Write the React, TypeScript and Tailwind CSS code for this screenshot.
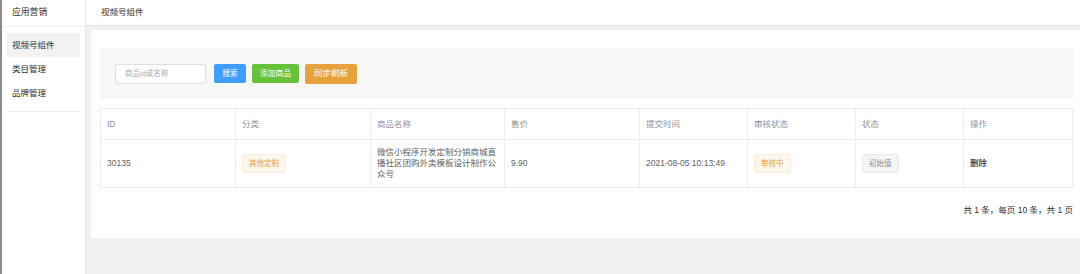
import React from "react";

const font = { fontFamily: '"Liberation Sans", "Noto Sans CJK SC", "Noto Sans", sans-serif' };

const cols = [135, 135, 134, 135, 108, 108, 108, 109];
const headers = ["ID", "分类", "商品名称", "售价", "提交时间", "审核状态", "状态", "操作"];

function Tag({ children, tone }: { children: React.ReactNode; tone: "warn" | "info" }) {
  const cls =
    tone === "warn"
      ? "bg-[#fdf6ec] border-[#faecd8] text-[#e6a23c]"
      : "bg-[#f4f4f5] border-[#e9e9eb] text-[#909399]";
  return (
    <span className={`inline-flex items-center h-[19px] px-[6px] rounded-[3px] border text-[7.5px] ${cls}`}>
      {children}
    </span>
  );
}

export default function App() {
  return (
    <div style={font} className="flex w-[1080px] h-[274px] overflow-hidden text-[8.5px] text-[#606266]">
      <aside className="w-[86px] shrink-0 border-l-2 border-l-[#8a8a8a] border-r border-r-[#ececec] bg-white flex flex-col">
        <div className="h-[27px] border-b border-[#f0f0f0] flex items-center pl-[10px] text-[8.8px] text-[#303133]">
          应用营销
        </div>
        <div className="px-[5px] pt-[6px]">
          <div className="h-[24px] rounded-[2px] bg-[#f2f2f2] flex items-center pl-[5px] text-[#303133]">视频号组件</div>
          <div className="h-[24px] flex items-center pl-[5px] text-[#303133]">类目管理</div>
          <div className="h-[24px] flex items-center pl-[5px] text-[#303133]">品牌管理</div>
          <div className="mt-[6px] border-t border-[#eeeeee]" />
        </div>
      </aside>
      <main className="flex-1 bg-[#f0f0f0] flex flex-col">
        <div className="h-[26px] shrink-0 bg-white border-b border-[#e3e3e3] flex items-center pl-[15px] text-[#303133]">
          视频号组件
        </div>
        <div className="mt-[4px] ml-[5px] h-[208px] bg-white pl-[9px] pr-[7px] pt-[18px]">
          <div className="h-[51px] bg-[#f7f7f7] flex items-center pl-[15px] gap-[8px]">
            <div className="w-[91px] h-[20px] bg-white border border-[#dcdfe6] rounded-[3px] flex items-center pl-[9px] text-[7.5px] text-[#a8abb2]">
              商品id或名称
            </div>
            <button className="h-[19px] w-[32px] rounded-[2px] bg-[#409eff] text-white text-[7.5px] flex items-center justify-center">搜索</button>
            <button className="h-[19px] w-[47px] -ml-[2px] rounded-[2px] bg-[#67c23a] text-white text-[7.8px] flex items-center justify-center">添加商品</button>
            <button className="h-[20px] w-[52px] -ml-[2px] rounded-[2px] bg-[#e6a23c] text-white text-[8.5px] flex items-center justify-center">同步刷新</button>
          </div>
          <div className="mt-[9px] border-t border-l border-[#ebeef5]">
            <div className="flex h-[31px] text-[#909399]">
              {headers.map((h, i) => (
                <div
                  key={h}
                  style={{ width: cols[i] }}
                  className="shrink-0 border-r border-b border-[#ebeef5] flex items-center pl-[6px]"
                >
                  {h}
                </div>
              ))}
            </div>
            <div className="flex h-[48px]">
              <div style={{ width: cols[0] }} className="shrink-0 border-r border-b border-[#ebeef5] flex items-center pl-[6px]">30135</div>
              <div style={{ width: cols[1] }} className="shrink-0 border-r border-b border-[#ebeef5] flex items-center pl-[6px]">
                <Tag tone="warn">其他定制</Tag>
              </div>
              <div style={{ width: cols[2] }} className="shrink-0 border-r border-b border-[#ebeef5] flex items-center pl-[6px] pr-[8px] leading-[11px]">
                微信小程序开发定制分销商城直播社区团购外卖模板设计制作公众号
              </div>
              <div style={{ width: cols[3] }} className="shrink-0 border-r border-b border-[#ebeef5] flex items-center pl-[6px]">9.90</div>
              <div style={{ width: cols[4] }} className="shrink-0 border-r border-b border-[#ebeef5] flex items-center pl-[6px]">2021-08-05 10:13:49</div>
              <div style={{ width: cols[5] }} className="shrink-0 border-r border-b border-[#ebeef5] flex items-center pl-[6px]">
                <Tag tone="warn">审核中</Tag>
              </div>
              <div style={{ width: cols[6] }} className="shrink-0 border-r border-b border-[#ebeef5] flex items-center pl-[6px]">
                <Tag tone="info">初始值</Tag>
              </div>
              <div style={{ width: cols[7] }} className="shrink-0 border-r border-b border-[#ebeef5] flex items-center pl-[6px] text-[#303133] font-medium">
                删除
              </div>
            </div>
          </div>
          <div className="mt-[16px] flex justify-end text-[#303133]">共 1 条，每页 10 条，共 1 页</div>
        </div>
      </main>
    </div>
  );
}
